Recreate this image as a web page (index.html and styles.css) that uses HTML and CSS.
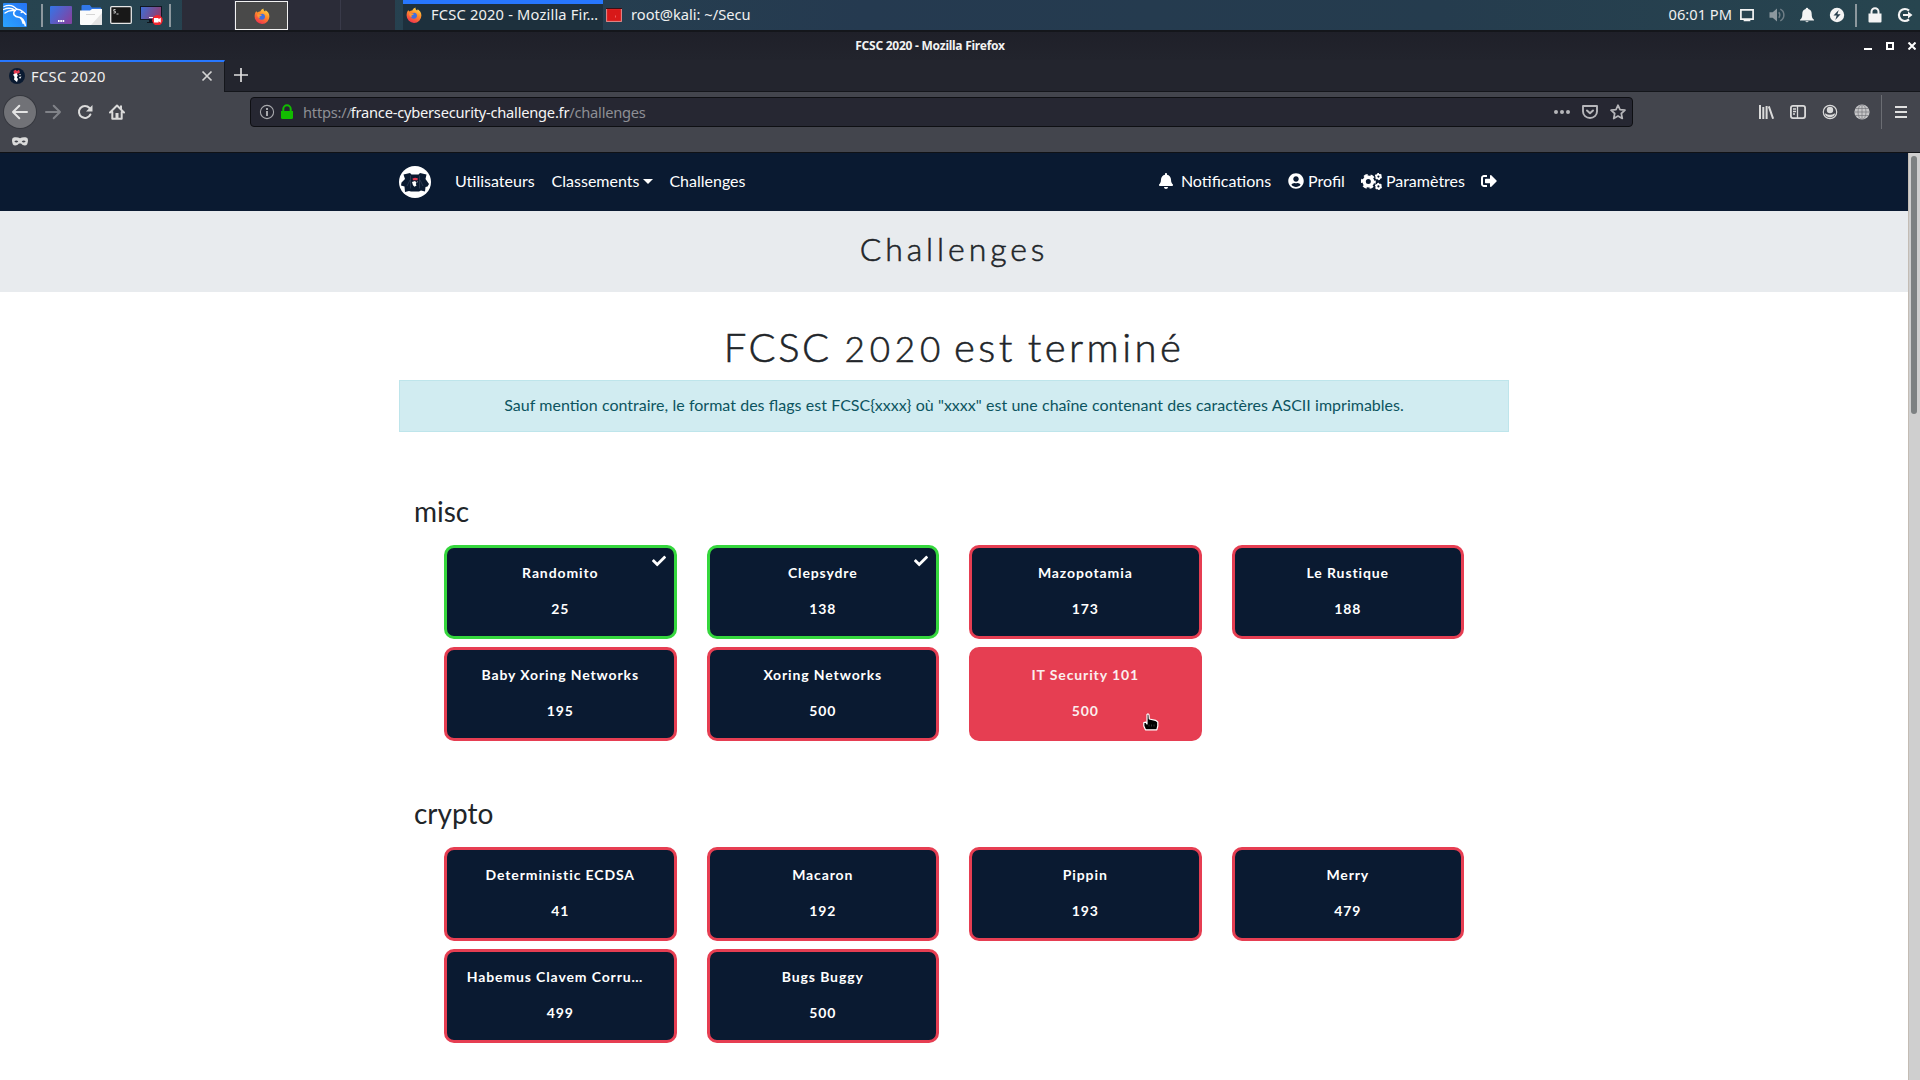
FILE: index.html
```html
<!DOCTYPE html>
<html lang="fr">
<head>
<meta charset="utf-8">
<title>FCSC 2020</title>
<link rel="stylesheet" href="styles.css">
</head>
<body>
<svg class="defs" width="0" height="0" aria-hidden="true">
  <defs>
    <linearGradient id="g-purple" x1="0" y1="0" x2="1" y2="0.6"><stop offset="0" stop-color="#3376e8"/><stop offset="1" stop-color="#7f45a5"/></linearGradient>
    <linearGradient id="g-screen" x1="0" y1="0" x2="1" y2="0.3"><stop offset="0" stop-color="#3b70d8"/><stop offset="1" stop-color="#8f3f72"/></linearGradient>
    <linearGradient id="g-kali" x1="0" y1="1" x2="1" y2="0"><stop offset="0" stop-color="#2aa5ff"/><stop offset="1" stop-color="#2673f5"/></linearGradient>
    <linearGradient id="g-fox" x1="0.8" y1="0" x2="0.3" y2="1"><stop offset="0" stop-color="#ffe04a"/><stop offset="0.45" stop-color="#ff8a2a"/><stop offset="1" stop-color="#f0304f"/></linearGradient>
    <symbol id="firefox" viewBox="0 0 16 16">
      <path fill="url(#g-fox)" d="M2.2 3.2 3.6 4.4C4.2 3.6 5.2 3.3 6.2 3.4 7 2.2 8 1 9.6.6c-.4 1.2.3 2 1.5 2.8l.6-1.1c2.2 1.4 3.7 3.5 3.7 6.1A7.4 7.4 0 0 1 .6 8.6C.6 6.200 1.200 4.500 2.200 3.200Z"/>
      <path fill="#3f6fe0" d="M5.200 6.500c1 .2 1.900-.6 3-.8 1.600 0 2.800 1.200 2.800 2.900a3.100 3.100 0 0 1-6.200.2c0-.9.1-1.700.4-2.300Z"/>
      <path fill="#ff9a30" d="M3.200 6.500c1.400-.6 2.700-.2 4.900.6-.7 1-1.900 1-2.600 1.500-.4.500.2 1.200.9 1.300-1.800.4-3.300-1.300-3.200-3.400Z"/>
    </symbol>
    <symbol id="check" viewBox="0 0 512 512"><path fill="currentColor" d="M173.898 439.404l-166.4-166.4c-9.997-9.997-9.997-26.206 0-36.204l36.203-36.204c9.997-9.998 26.207-9.998 36.204 0L192 312.690 432.095 72.596c9.997-9.997 26.207-9.997 36.204 0l36.203 36.204c9.997 9.997 9.997 26.206 0 36.204l-294.400 294.401c-9.998 9.997-26.207 9.997-36.204-.001z"/></symbol>
  </defs>
</svg>

<header class="panel">
  <svg class="kali" width="24" height="24" viewBox="0 0 24 24"><rect width="24" height="24" rx="1" fill="url(#g-kali)"/><g fill="none" stroke="#fff" stroke-linecap="round"><path stroke-width="1.300" d="M1 3.500C6 1.500 11 3 14 6.500M.6 6.500C5 4.500 9 5 12.500 7.500M2 10C4.500 8 7.500 7.200 11 7.600"/><path stroke-width="1.500" d="M13 6c2 .2 5 .8 7 2.800l2.800 2.400M20 8.800l-1.700.6M12 7.500c-3 3.200-.5 6.500 4 6.700 3.500.3 5.300 3 6.300 8.300M17 14.400c2 1.600 3 4 3.200 6"/></g></svg>
  <i class="sep sep-a"></i>
  <svg class="launch" width="22" height="20" viewBox="0 0 22 20"><rect y="1" width="22" height="18" rx="1" fill="url(#g-purple)"/><path fill="#fff" d="M8 15h1.600v2H8zM10.300 15h1.600v2h-1.600zM12.600 15h1.600v2h-1.600z"/></svg>
  <svg class="launch" width="22" height="20" viewBox="0 0 22 20"><path fill="#3178ea" d="M1.500 1q0-1 1-1h7.300l2 2.500h8.400q1 0 1 1V10H1.500z"/><path fill="#fbfbfb" d="M0 5.500h10l2-1.500h10v15q0 1-1 1H1q-1 0-1-1z"/><path fill="#e4e4e4" d="M22 8v11q0 1-1 1H11z"/><path stroke="#d5d5d5" d="M6 9.500h9"/></svg>
  <svg class="launch" width="22" height="20" viewBox="0 0 22 20"><rect x=".7" y="1.700" width="20.600" height="16.600" rx="1" fill="#181818" stroke="#e6e6e6" stroke-width="1.300"/><path fill="none" stroke="#c8c8c8" d="M5.500 4.500H3.800v1.700h1.500V8H3.500M6.500 9h2"/></svg>
  <svg class="launch" width="24" height="20" viewBox="0 0 24 20"><rect x=".5" y="1.500" width="21" height="13" fill="url(#g-screen)" stroke="#111722"/><path fill="#10151e" d="M9 15h4v2h2v1H7v-1h2z"/><path stroke="#fff" d="M9 12.500h4"/><circle cx="17.500" cy="15.200" r="5.300" fill="#f2262f"/><path fill="#fff" d="M14 13h4.500v1.300l2.300-1.500v4.900l-2.300-1.500v1.300H14z"/></svg>
  <i class="sep sep-b"></i>
  <div class="pager"><span></span><span class="active"><svg width="16" height="16"><use href="#firefox"/></svg></span><span></span><span></span></div>
  <div class="task current"><svg width="16" height="16"><use href="#firefox"/></svg><span>FCSC 2020 - Mozilla Fir…</span></div>
  <div class="task"><svg width="16" height="14" viewBox="0 0 16 14"><rect x=".6" y=".6" width="14.800" height="12.800" fill="#d81818" stroke="#e78d8d"/><path stroke="#3a1015" d="M0 .5h16"/><path fill="#f15a5a" d="M9 7.500h1v2H9z"/></svg><span>root@kali: ~/Secu</span></div>
  <div class="tray">
    <time>06:01 PM</time>
    <span><svg width="16" height="16" viewBox="0 0 16 16"><path fill="none" stroke="#f4f4f4" stroke-width="1.700" d="M1.900 2.900h12.200v9.200H1.900zM5.500 12.300v1.200h5v-1.200"/></svg></span>
    <span><svg width="16" height="16" viewBox="0 0 16 16"><path fill="#8c989f" d="M.5 5.300h3.200L8 1.500v13L3.700 10.700H.5z"/><path fill="none" stroke="#6f7e87" stroke-width="1.500" d="M9.800 5.300q2 2.700 0 5.400M11.300 2.200a6.500 6.500 0 0 1 0 11.600"/></svg></span>
    <span><svg width="16" height="16" viewBox="0 0 16 16"><path fill="#f4f4f4" d="M8 .7q1.200 0 1.300 1.300c2.500.6 3.400 2.500 3.400 5 0 3 .5 4.200 2.300 5.800v.7H1v-.7C2.800 11.200 3.300 10 3.300 7c0-2.500.9-4.400 3.400-5Q6.800.7 8 .7zM6.200 14.200h3.600Q8 16.300 6.200 14.200z"/></svg></span>
    <span><svg width="16" height="16" viewBox="0 0 16 16"><circle cx="8" cy="8" r="7.200" fill="#f4f4f4"/><path fill="#263e4d" d="M9.700 3 4.500 8.600h3.200L6.300 13l5.300-5.800H8.400z"/></svg></span>
    <i class="sep"></i>
    <span><svg width="16" height="16" viewBox="0 0 16 16"><path fill="#f4f4f4" d="M1.500 6.500h13v8q0 1-1 1h-11q-1 0-1-1z"/><path fill="none" stroke="#f4f4f4" stroke-width="2" d="M4.500 7V4.700a3.500 3.500 0 0 1 7 0V7"/></svg></span>
    <span><svg width="16" height="16" viewBox="0 0 16 16"><path fill="none" stroke="#f4f4f4" stroke-width="2.200" d="M12 3.600a6 6 0 1 0 0 8.800"/><path fill="#f4f4f4" d="M6 7h5V4.500L15.500 8 11 11.500V9H6z"/></svg></span>
  </div>
</header>

<section class="browser">
  <div class="titlebar">
    <h2>FCSC 2020 - Mozilla Firefox</h2>
    <svg class="winctl" width="52" height="8" viewBox="0 0 52 8"><path fill="#fff" d="M0 6h8v2H0z"/><rect x="23" y="1" width="6" height="6" fill="none" stroke="#fff" stroke-width="2"/><path stroke="#fff" stroke-width="2" d="m44.500.5 7 7m0-7-7 7"/></svg>
  </div>
  <div class="tabs">
    <div class="tab">
      <svg width="16" height="16" viewBox="0 0 16 16"><circle cx="8" cy="8" r="8" fill="#0a1a31"/><path fill="#e23a50" d="m4.500 3 2-1.200L8 3l2-1.200L11 4.500 8 6H5z"/><path fill="#fff" d="M4 6.500 7.500 5l1.300 2.500-1 2L9 11l-1 3-3-2.500.5-2.500zM10 6l2 .5-1 1zM10 9l2.500-.5L11 11z"/></svg>
      <span>FCSC 2020</span>
      <svg class="close" width="12" height="12" viewBox="0 0 12 12"><path stroke="#d4d4d4" stroke-width="1.700" d="m1.500 1.500 9 9m0-9-9 9"/></svg>
    </div>
    <div class="newtab"><svg width="14" height="14" viewBox="0 0 14 14"><path stroke="#dedede" stroke-width="1.700" d="M7 0v14M0 7h14"/></svg></div>
  </div>
  <div class="toolbar">
    <span class="tool back"><svg width="18" height="16" viewBox="0 0 18 16"><path fill="none" stroke="#e4e4e4" stroke-width="2" stroke-linecap="round" stroke-linejoin="round" d="M16 8H2m6.300-6.300L2 8l6.300 6.300"/></svg></span>
    <span class="tool"><svg width="18" height="16" viewBox="0 0 18 16"><path fill="none" stroke="#808288" stroke-width="2" stroke-linecap="round" stroke-linejoin="round" d="M2 8h14M9.700 1.700 16 8l-6.300 6.300"/></svg></span>
    <span class="tool"><svg width="16" height="16" viewBox="0 0 16 16"><path fill="none" stroke="#dadada" stroke-width="2" stroke-linecap="round" d="M13.400 10.500A6 6 0 1 1 12.500 4"/><path fill="#dadada" d="M15.500 1v6.500H9z"/></svg></span>
    <span class="tool"><svg width="16" height="16" viewBox="0 0 16 16"><path fill="none" stroke="#dadada" stroke-width="2" stroke-linecap="round" stroke-linejoin="round" d="M1 8.500 8 1.500l7 7M3.300 8v6.800h9.400V8"/><path fill="#dadada" d="M6.500 9h3v6h-3zM11 1.500h2V5h-2z"/></svg></span>
    <div class="urlbar">
      <svg class="info" width="16" height="16" viewBox="0 0 16 16"><circle cx="8" cy="8" r="6.600" fill="none" stroke="#a8a9ad" stroke-width="1.100"/><path fill="#a8a9ad" d="M7 7h2v5H7zM7 4h2v2H7z"/></svg>
      <svg width="12" height="16" viewBox="0 0 12 16"><path fill="#12bc00" d="M0 7h12v6.500Q12 15 10.500 15h-9Q0 15 0 13.500z"/><path fill="none" stroke="#12bc00" stroke-width="2" d="M2.300 8V5a3.700 3.700 0 0 1 7.400 0v3"/></svg>
      <p class="url">https://<b>france-cybersecurity-challenge.fr</b>/challenges</p>
      <svg width="16" height="16" viewBox="0 0 16 16"><g fill="#b6b6ba"><circle cx="2" cy="8" r="2"/><circle cx="8" cy="8" r="2"/><circle cx="14" cy="8" r="2"/></g></svg>
      <svg width="16" height="16" viewBox="0 0 16 16"><path fill="none" stroke="#b6b6ba" stroke-width="1.900" stroke-linejoin="round" d="M1 2h14v5.500a7 6.500 0 0 1-14 0z"/><path fill="none" stroke="#b6b6ba" stroke-width="2" stroke-linecap="round" stroke-linejoin="round" d="M5 6.500 8 9.300l3-2.800"/></svg>
      <svg width="16" height="16" viewBox="0 0 16 16"><path fill="none" stroke="#b6b6ba" stroke-width="1.700" stroke-linejoin="round" d="m8 1.200 2 4.500 5 .5-3.700 3.300 1 5L8 12l-4.300 2.500 1-5L1 6.200l5-.5z"/></svg>
    </div>
    <div class="right-tools">
      <span class="tool"><svg width="16" height="16" viewBox="0 0 16 16"><path stroke="#dadada" stroke-width="2" d="M2 1v14M5.300 3v12M8.600 2v13M10.800 2.300l4.300 12.400"/></svg></span>
      <span class="tool"><svg width="16" height="16" viewBox="0 0 16 16"><rect x=".9" y="1.900" width="14.200" height="12.200" rx="2" fill="none" stroke="#dadada" stroke-width="1.800"/><path fill="none" stroke="#dadada" stroke-width="1.300" d="M7.500 2v12M3 5h3M3 7.500h3M3 10h2"/></svg></span>
      <span class="tool"><svg width="16" height="16" viewBox="0 0 16 16"><circle cx="8" cy="8" r="6.700" fill="none" stroke="#dadada" stroke-width="1.200"/><circle cx="8" cy="6" r="3.200" fill="#dadada"/><path fill="#dadada" d="M3 9.300Q8 12.300 13 9.300 13.200 12.500 8 13.600 2.800 12.500 3 9.300z"/></svg></span>
      <span class="tool"><svg width="16" height="16" viewBox="0 0 16 16"><circle cx="8" cy="8" r="7.600" fill="#c6c6c8"/><g fill="none" stroke="#75777c" stroke-width=".7"><path d="M8 .5v15M1 4.500h14M.5 8h15M1 11.500h14"/><ellipse cx="8" cy="8" rx="4" ry="7.500"/></g></svg></span>
      <i class="divider"></i>
      <span class="tool menu"><svg width="12" height="12" viewBox="0 0 12 12"><path stroke="#e0e0e0" stroke-width="2" d="M0 1h12M0 6h12M0 11h12"/></svg></span>
    </div>
  </div>
  <div class="bookmarks"><svg width="16" height="9" viewBox="0 0 16 9"><path fill="#dadada" fill-rule="evenodd" d="M2.500.3Q6 0 8 1.200 10 0 13.500.3 16 .5 16 3q0 5.500-3.200 5.500Q10.500 8.500 9 6.500H7Q5.500 8.500 3.200 8.500 0 8.500 0 3 0 .5 2.500.3zM2.300 4.500Q4.500 6.500 6.300 4.500 4.300 2.500 2.300 4.500zm7.400 0q1.800 2 4 0-2-2-4 0z"/></svg></div>
</section>

<div class="viewport">
  <main class="page">
    <nav class="navbar">
      <div class="container">
        <svg class="brand" width="32" height="32" viewBox="0 0 32 32"><circle cx="16" cy="16" r="16" fill="#fff"/><path fill="#0a1a31" d="M4.500 8.500 11 7l1.500 1.500h7L21 7l6.500 1.500-1 4.500 3.500 5-1.500 2.500-2 .5-.5 4.500-4-1-2 1h-8l-2-.5-4 1-.5-5.500-3.500-1 .5-3L6 13z"/><path fill="none" stroke="#46536a" stroke-width=".5" d="M11.500 9.500v13M20.500 9.500v13M8 20l3-6M24 20l-3-6"/><path fill="#e23a50" d="m13.500 12.500 2.500-.7 2.800.5-.3 2h-4.500z"/><path fill="#fff" d="m13 16 3-1 1.500 1.500-.7 1.500.7 1.500-2 1.200-1.500-1.500zM18 15.500l1.200.3-.8.8z"/></svg>
        <div class="links">
          <a>Utilisateurs</a><a class="drop">Classements</a><a>Challenges</a>
        </div>
        <div class="links account">
          <a class="notif"><svg class="bell" width="14" height="16" viewBox="0 0 448 512"><path fill="currentColor" d="M224 512c35.320 0 63.970-28.650 63.970-64H160.030c0 35.350 28.650 64 63.970 64zm215.390-149.710c-19.320-20.760-55.470-51.990-55.470-154.290 0-77.700-54.480-139.900-127.940-155.160V32c0-17.670-14.320-32-31.980-32s-31.980 14.330-31.980 32v20.840C118.560 68.100 64.080 130.300 64.080 208c0 102.300-36.150 133.530-55.470 154.290-6 6.450-8.660 14.160-8.610 21.710.11 16.400 12.980 32 32.100 32h383.800c19.120 0 32-15.600 32.100-32 .05-7.550-2.610-15.270-8.610-21.710z"/></svg>Notifications</a>
          <a><svg width="16" height="16" viewBox="0 0 496 512"><path fill="currentColor" d="M248 8C111 8 0 119 0 256s111 248 248 248 248-111 248-248S385 8 248 8zm0 96c48.600 0 88 39.400 88 88s-39.400 88-88 88-88-39.400-88-88 39.400-88 88-88zm0 344c-58.700 0-111.300-26.600-146.500-68.200 18.800-35.400 55.600-59.800 98.500-59.800 2.400 0 4.800.4 7.100 1.100 13 4.200 26.600 6.900 40.900 6.900 14.300 0 28-2.700 40.900-6.900 2.300-.7 4.700-1.100 7.100-1.100 42.900 0 79.700 24.400 98.500 59.800C359.300 421.400 306.700 448 248 448z"/></svg>Profil</a>
          <a><svg class="cogs" width="21" height="17" viewBox="0 0 20 16"><g fill="none" stroke="currentColor"><circle cx="7" cy="8" r="4" stroke-width="3.200"/><circle cx="7" cy="8" r="6.100" stroke-width="2" stroke-dasharray="3.640 2.748" stroke-dashoffset="1.820"/><circle cx="16.600" cy="3.300" r="1.900" stroke-width="1.700"/><circle cx="16.600" cy="3.300" r="2.900" stroke-width="1" stroke-dasharray="1.700 1.337"/><circle cx="16.600" cy="12.700" r="1.900" stroke-width="1.700"/><circle cx="16.600" cy="12.700" r="2.900" stroke-width="1" stroke-dasharray="1.700 1.337"/></g></svg>Paramètres</a>
          <a><svg class="exit" width="16" height="16" viewBox="0 0 512 512"><path fill="currentColor" d="M497 273L329 441c-15 15-41 4.500-41-17v-96H152c-13.300 0-24-10.700-24-24v-96c0-13.300 10.700-24 24-24h136V88c0-21.400 25.900-32 41-17l168 168c9.300 9.400 9.300 24.600 0 34zM192 436v-40c0-6.600-5.400-12-12-12H96c-17.700 0-32-14.300-32-32V160c0-17.700 14.300-32 32-32h84c6.600 0 12-5.400 12-12V76c0-6.600-5.400-12-12-12H96c-53 0-96 43-96 96v192c0 53 43 96 96 96h84c6.600 0 12-5.400 12-12z"/></svg></a>
        </div>
      </div>
    </nav>
    <div class="jumbotron"><h1>Challenges</h1></div>
    <div class="container content">
      <h1 class="ended"><span class="w-caps">FCSC</span><span class="w-year">2020</span><span class="w-low">est</span><span class="w-low">terminé</span></h1>
      <div class="alert">Sauf mention contraire, le format des flags est FCSC{xxxx} où "xxxx" est une chaîne contenant des caractères ASCII imprimables.</div>

      <section class="category">
        <h3>misc</h3>
        <div class="grid">
          <button class="card solved"><svg class="tick" width="14" height="14"><use href="#check"/></svg><p>Randomito</p><p>25</p></button>
          <button class="card solved"><svg class="tick" width="14" height="14"><use href="#check"/></svg><p>Clepsydre</p><p>138</p></button>
          <button class="card"><p>Mazopotamia</p><p>173</p></button>
          <button class="card"><p>Le Rustique</p><p>188</p></button>
          <button class="card"><p>Baby Xoring Networks</p><p>195</p></button>
          <button class="card"><p>Xoring Networks</p><p>500</p></button>
          <button class="card hovered"><p>IT Security 101</p><p>500</p>
            <svg class="cursor" width="16" height="18" viewBox="0 0 16 18"><path fill="#000" stroke="#fff" stroke-width="1.200" stroke-linejoin="round" d="M4 1.500q1.500-1.300 2 .5L6.300 6 12.500 7.300 14.800 9v4l-1 3.800H2.500L.8 13V9.500l2-.3L4 11z"/><path stroke="#555" stroke-width=".6" d="M6 11.500v2M8.500 11.500v2M11 11.500v2"/></svg>
          </button>
        </div>
      </section>

      <section class="category">
        <h3>crypto</h3>
        <div class="grid">
          <button class="card"><p>Deterministic ECDSA</p><p>41</p></button>
          <button class="card"><p>Macaron</p><p>192</p></button>
          <button class="card"><p>Pippin</p><p>193</p></button>
          <button class="card"><p>Merry</p><p>479</p></button>
          <button class="card"><p class="clipped">Habemus Clavem Corru…</p><p>499</p></button>
          <button class="card"><p>Bugs Buggy</p><p>500</p></button>
        </div>
      </section>
    </div>
  </main>
  <div class="scrollbar"><i></i></div>
</div>
</body>
</html>
```
FILE: styles.css
```css
* { box-sizing: border-box; }
html, body { height: 100%; }
body {
  margin: 0;
  overflow: hidden;
  display: flex;
  flex-direction: column;
  background: #fff;
  font-family: "Lato", "Liberation Sans", sans-serif;
}
svg { display: block; flex: none; }
.defs { position: absolute; }
h1, h2, h3, p { margin: 0; font-weight: 400; }

/* desktop panel */
.panel {
  flex: none;
  height: 30px;
  display: flex;
  align-items: center;
  background: linear-gradient(90deg, #274450 0, #26404f 25%, #253a50 45%, #253c4e 75%, #27454f 100%);
  color: #f0f0f0;
  font: 14.667px/20px "Noto Sans", sans-serif;
}
.kali { margin-left: 3px; }
.sep { flex: none; width: 2px; height: 23px; background: #8d989e; }
.sep-a { margin: 0 7px 0 14px; }
.launch { margin-right: 8px; }
.sep-b { margin: 0 11px 0 -3px; }
.pager { display: flex; width: 213px; height: 30px; background: #2b2c38; }
.pager span { width: 53px; border-right: 1px solid #393a49; display: flex; align-items: center; justify-content: center; }
.pager span:last-child { border: 0; }
.pager .active { margin-top: 1px; height: 29px; background: #494949; border: 1px solid #f2f2f2; }
.task { display: flex; align-items: center; height: 30px; padding-left: 3px; gap: 9px; }
.task span, .tray time { padding-bottom: 2px; }
.task.current {
  width: 200px;
  margin-left: 8px;
  background: #1d303d;
  box-shadow: inset 0 4px #2777ff;
  letter-spacing: .18px;
}
.tray { margin-left: auto; display: flex; align-items: center; }
.tray span { width: 30px; display: flex; justify-content: center; }
.tray .sep { margin: 0 3px; }

/* browser chrome */
.browser { flex: none; font-family: "Noto Sans", sans-serif; border-bottom: 1px solid #101216; background: #43454d; }
.titlebar {
  height: 30px;
  display: flex;
  align-items: center;
  justify-content: flex-end;
  background: linear-gradient(#1f2029, #22242d);
  border-top: 2px solid #14161b;
}
.titlebar h2 { flex: 1; padding-right: 4px; text-align: center; color: #f2f2f2; font-size: 12px; line-height: 16px; font-weight: 700; letter-spacing: -.25px; }
.winctl { margin-right: 4px; }
.tabs { height: 32px; display: flex; background: #23252e; }
.tab {
  width: 225px;
  display: flex;
  align-items: center;
  padding: 0 11px 2px 9px;
  background: #43454d;
  border-top: 2px solid #2777ff;
  border-right: 1px solid #14161b;
  color: #f0f0f0;
  font-size: 14.667px;
  line-height: 20px;
  letter-spacing: .35px;
}
.tab span { margin-left: 6px; flex: 1; padding-bottom: 1px; }
.newtab { flex: 1; padding: 8px 9px; border-bottom: 1px solid #14161b; }
.toolbar { height: 40px; display: flex; align-items: center; padding-left: 4px; }
.tool { width: 32px; height: 32px; display: flex; align-items: center; justify-content: center; }
.tool.back { border-radius: 50%; background: #717277; box-shadow: 0 0 0 1px #36383f; margin-right: 1px; }
.urlbar {
  width: 1383px;
  height: 30px;
  margin-left: 117px;
  display: flex;
  align-items: center;
  gap: 12px;
  padding: 0 6px 0 8px;
  background: #262732;
  border: 1px solid #0e0f13;
  border-radius: 4px;
}
.info { margin-right: -6px; }
.url { flex: 1; margin-left: -2px; font-size: 14.667px; line-height: 20px; letter-spacing: -.23px; color: #8e8f95; }
.url b { margin-left: -1px; font-weight: 400; color: #f5f5f5; }
.right-tools { margin-left: auto; display: flex; align-items: center; }
.divider { width: 1px; height: 34px; margin-left: 3px; background: #6b6d73; }
.menu { width: 38px; }
.bookmarks { height: 20px; padding: 5px 0 0 12px; }

/* web page */
.viewport { flex: 1; min-height: 0; display: flex; }
.page { flex: 1; min-width: 0; overflow: hidden; color: #212529; }
.container { width: 1110px; margin: 0 auto; }
.navbar { height: 58px; background: #0a1a31; color: #fff; }
.navbar .container { height: 100%; display: flex; align-items: center; }
.links { display: flex; margin-left: 16px; padding-bottom: 2px; }
.links a { display: flex; align-items: center; padding: 0 8px; font-size: 16px; line-height: 24px; }
.links .drop { padding-left: 9px; }
.drop::after { content: ""; margin-left: 4px; border: 5px solid transparent; border-top-color: currentColor; border-bottom: 0; }
.account { margin-left: auto; margin-right: 4px; }
.account svg { margin-right: 4px; }
.account .notif { padding-right: 9px; }
.account .bell { margin-right: 8px; }
.account .cogs { margin-right: 4px; }
.account .exit { margin-right: 0; }
.jumbotron { height: 81px; background: #e8ebee; text-align: center; }
.jumbotron h1 { padding-top: 19px; font-size: 32px; line-height: 38px; font-weight: 300; letter-spacing: 3.900px; -webkit-text-stroke: .55px; }
.content { padding-top: 31px; }
.ended { display: flex; justify-content: center; align-items: baseline; height: 57px; font-size: 40px; line-height: 48px; font-weight: 300; -webkit-text-stroke: .55px; }
.w-caps { letter-spacing: 2.500px; margin-right: 13px; }
.w-year { font-size: 35px; letter-spacing: 4.800px; margin-right: 9px; }
.w-low { letter-spacing: 3.400px; }
.w-low + .w-low { margin-left: 12px; }
.alert {
  height: 52px;
  border: 1px solid #bee5eb;
  background: #d1ecf1;
  color: #0c5460;
  text-align: center;
  font-size: 16px;
  line-height: 48px;
  word-spacing: .21px;
}
.category { padding-left: 15px; }
.category h3 { font-size: 28px; line-height: 32px; }
.alert + .category { margin-top: 63px; }
.category + .category { margin-top: 56px; }
.grid {
  display: grid;
  grid-template-columns: repeat(4, 232.500px);
  column-gap: 30px;
  row-gap: 8px;
  padding: 18px 0 0 30px;
}
.card {
  position: relative;
  height: 94px;
  padding: 15px 0 0;
  border: 3px solid #e63e52;
  border-radius: 10px;
  background: #0a1a31;
  color: #fff;
  font: 700 14px/20px "Lato", sans-serif;
  letter-spacing: .880px;
  display: flex;
  flex-direction: column;
  align-items: center;
  gap: 16px;
}
.card p { font-weight: inherit; }
.card .clipped { width: 187px; text-align: left; }
.card.solved { border-color: #35d73d; }
.card.hovered { background: #e63e52; color: #fbeeee; }
.tick { position: absolute; top: 6px; right: 8px; }
.cursor { position: absolute; left: 171px; top: 63px; }
.scrollbar { width: 12px; flex: none; background: #cfcfcf; border-left: 1px solid #c3bcb4; padding: 3px 0 0 2px; }
.scrollbar i { display: block; width: 6px; height: 258px; border-radius: 3px; background: #7d8182; }
```
